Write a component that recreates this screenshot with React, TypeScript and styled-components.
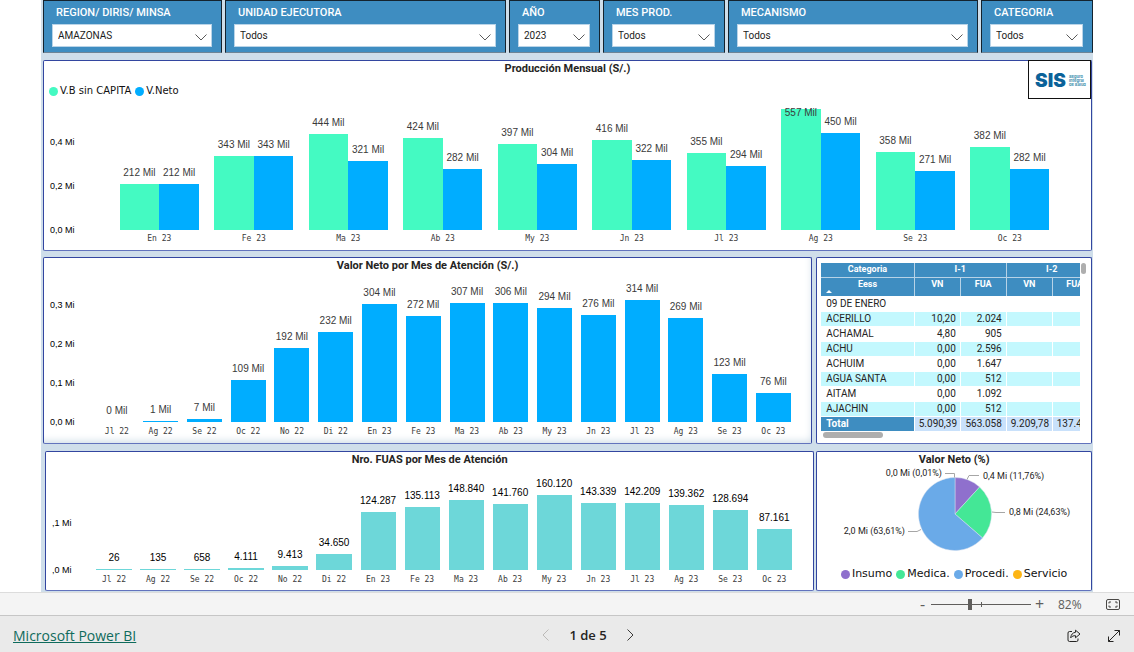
import React from "react";
import styled, { createGlobalStyle } from "styled-components";

const GlobalStyle = createGlobalStyle`
  *, *::before, *::after { box-sizing: border-box; }
  body {
    margin: 0;
    background: #ffffff;
    font-family: Roboto, "Liberation Sans", sans-serif;
    color: #252423;
  }
  button, select, input { font: inherit; color: inherit; margin: 0; }
`;

const Report = styled.main`
  display: flex;
  flex-direction: column;
  margin: 0 41px;
  padding: 0 1px 1px 2px;
  background: #cfdeea;
`;

/* ---------- Slicers ---------- */

const Slicers = styled.form`
  display: grid;
  grid-template-columns: 179fr 281fr 91fr 122fr 250fr 112fr;
  gap: 3px;
  margin-right: -1px;
`;

const Slicer = styled.label`
  display: flex;
  flex-direction: column;
  min-width: 0;
  padding: 4px 9px 5px 8px;
  border: 1px solid #14232e;
  border-bottom-color: #6d8496;
  background: #3e8dc1;
`;

const SlicerTitle = styled.span`
  padding-left: 4px;
  font-size: 11px;
  line-height: 15px;
  font-weight: 500;
  color: #ffffff;
  white-space: nowrap;
`;

const SlicerField = styled.span`
  display: grid;
  align-items: center;
  margin-top: 4px;
  border: 1px solid #b9d4e8;
  background: #ffffff;
  & > * { grid-area: 1 / 1; }
`;

const SlicerSelect = styled.select`
  appearance: none;
  width: 100%;
  height: 21px;
  padding: 0 20px 0 5px;
  border: 0;
  background: transparent;
  font-size: 10px;
  line-height: 21px;
  color: #1c1c1c;
`;

const SlicerChevron = styled.svg`
  justify-self: end;
  margin: 4px 4px 0 0;
  pointer-events: none;
`;

/* ---------- Panels ---------- */

const Panel = styled.section<{ $glow?: boolean }>`
  position: relative;
  display: flex;
  flex-direction: column;
  min-width: 0;
  border: 1px solid #3346a0;
  border-bottom-color: #6273bd;
  border-radius: 2px;
  background: #ffffff;
  box-shadow: ${(p) => (p.$glow ? "inset -4px -7px 8px -6px #c6d6e2" : "none")};
`;

const PanelTitle = styled.h2`
  margin: 0;
  font-size: 11px;
  line-height: 15px;
  font-weight: 700;
  text-align: center;
`;

const Top = styled.div`
  margin: 7px 0 6px;
`;

const Row = styled.div<{ $indent?: number; $gap: number }>`
  display: grid;
  grid-template-columns: minmax(0, 770fr) minmax(0, 276fr);
  gap: ${(p) => p.$gap}px;
  padding-left: ${(p) => p.$indent ?? 0}px;
  & + & { margin-top: 7px; }
`;

const LogoBox = styled.div`
  position: absolute;
  top: -1px;
  right: 0;
  width: 63px;
  height: 39px;
  border: 1px solid #111111;
  background: #ffffff;
`;

const Legend = styled.ul<{ $size: number; $center?: boolean }>`
  display: flex;
  justify-content: ${(p) => (p.$center ? "center" : "flex-start")};
  gap: 4px;
  margin: ${(p) => (p.$center ? "10px 0 8px" : "8px 0 9px")};
  padding: 0 5px;
  list-style: none;
  font-family: "DejaVu Sans", sans-serif;
  font-size: ${(p) => p.$size}px;
  line-height: 14px;
  color: #111111;
`;

const LegendItem = styled.li<{ $color: string }>`
  display: flex;
  align-items: center;
  gap: 2px;
  white-space: nowrap;
  &::before {
    content: "";
    width: 9px;
    height: 9px;
    border-radius: 50%;
    background: ${(p) => p.$color};
  }
`;

/* ---------- Bar charts ---------- */

const ChartBody = styled.div<{ $axis: number; $right: number; $bottom: number }>`
  display: grid;
  grid-template-columns: ${(p) => p.$axis}px minmax(0, 1fr);
  margin-top: auto;
  padding: 0 ${(p) => p.$right}px ${(p) => p.$bottom}px 0;
`;

const Axis = styled.div<{ $step: number; $base: number }>`
  display: flex;
  flex-direction: column;
  justify-content: flex-end;
  gap: ${(p) => p.$step - 10}px;
  padding: 0 0 ${(p) => p.$base - 5}px 6px;
  font-family: "Liberation Sans", sans-serif;
  font-size: 9px;
  line-height: 10px;
  color: #000000;
`;

const Plot = styled.div`
  display: flex;
`;

const Group = styled.div`
  flex: 1 1 0;
  min-width: 0;
  display: flex;
  flex-direction: column;
  align-items: center;
`;

const Bars = styled.div<{ $height: number; $share: number }>`
  display: flex;
  align-items: flex-end;
  width: ${(p) => p.$share}%;
  height: ${(p) => p.$height}px;
`;

const BarSlot = styled.div`
  flex: 1 1 0;
  min-width: 0;
  display: flex;
  flex-direction: column;
  align-items: center;
`;

const BarLabel = styled.span<{ $dark?: boolean }>`
  position: relative;
  z-index: 1;
  font-family: "Liberation Sans", sans-serif;
  font-size: 10px;
  line-height: 12px;
  color: ${(p) => (p.$dark ? "#000000" : "#3a3a3a")};
  white-space: nowrap;
`;

const Bar = styled.div<{ $color: string }>`
  width: 100%;
  background: ${(p) => p.$color};
`;

const Category = styled.span<{ $row: number }>`
  font-family: "DejaVu Sans Mono", monospace;
  font-size: 8px;
  line-height: ${(p) => p.$row}px;
  color: #3a3a3a;
  white-space: nowrap;
`;

type Series = { color: string; values: number[]; labels: string[] };

type BarChartProps = {
  months: string[];
  series: Series[];
  ticks: string[];
  step: number;
  scale: number;
  height: number;
  labelRow: number;
  bottom: number;
  axis: number;
  right: number;
  share: number;
  dark?: boolean;
};

function BarChart(p: BarChartProps) {
  return (
    <ChartBody $axis={p.axis} $right={p.right} $bottom={p.bottom}>
      <Axis $step={p.step} $base={p.labelRow}>
        {p.ticks.map((t) => (
          <span key={t}>{t}</span>
        ))}
      </Axis>
      <Plot>
        {p.months.map((m, i) => (
          <Group key={m}>
            <Bars $height={p.height} $share={p.share}>
              {p.series.map((s) => {
                const h = Math.max(Math.round(s.values[i] * p.scale), s.values[i] > 0 ? 1 : 0);
                return (
                  <BarSlot key={s.color}>
                    <BarLabel $dark={p.dark} style={{ marginBottom: Math.min(5, p.height - 12 - h) }}>
                      {s.labels[i]}
                    </BarLabel>
                    <Bar $color={s.color} style={{ height: h }} />
                  </BarSlot>
                );
              })}
            </Bars>
            <Category $row={p.labelRow}>{m}</Category>
          </Group>
        ))}
      </Plot>
    </ChartBody>
  );
}

/* ---------- Matrix ---------- */

const MatrixArea = styled.div`
  display: grid;
  grid-template-columns: minmax(0, 1fr) 5px;
  column-gap: 1px;
  padding: 5px 5px 3px 4px;
`;

const MatrixClip = styled.div`
  overflow: hidden;
`;

const Table = styled.table`
  table-layout: fixed;
  width: 276px;
  border-collapse: collapse;
  font-size: 10px;
  line-height: 13px;
`;

const HeadCell = styled.th<{ $tall?: boolean }>`
  height: ${(p) => (p.$tall ? 19 : 14)}px;
  padding: 0;
  border-right: 1px solid #b7d3e7;
  border-bottom: ${(p) => (p.$tall ? "0" : "1px solid #b7d3e7")};
  background: #3e8dc1;
  color: #ffffff;
  font-size: 9px;
  font-weight: 700;
  text-align: center;
  vertical-align: top;
`;

const SortMark = styled.span`
  position: absolute;
  left: 9px;
  top: 32px;
  border: 3px solid transparent;
  border-top: 0;
  border-bottom-color: #ffffff;
`;

const BodyRow = styled.tr<{ $alt: boolean }>`
  background: ${(p) => (p.$alt ? "#c3f8fe" : "#ffffff")};
`;

const NameCell = styled.th`
  height: 15px;
  padding: 0 0 0 5px;
  border-right: 1px solid #ffffff;
  border-bottom: 1px solid #ffffff;
  font-weight: 400;
  text-align: left;
  white-space: nowrap;
`;

const NumCell = styled.td<{ $start?: boolean }>`
  height: 15px;
  padding: 0 4px;
  border-right: 1px solid #ffffff;
  border-bottom: 1px solid #ffffff;
  text-align: ${(p) => (p.$start ? "left" : "right")};
  white-space: nowrap;
`;

const TotalRow = styled.tr`
  background: #c9e1fb;
  & > th {
    background: #3e8dc1;
    color: #ffffff;
    font-weight: 700;
  }
`;

const ScrollThumb = styled.div<{ $w: number; $h: number }>`
  width: ${(p) => p.$w}px;
  height: ${(p) => p.$h}px;
  margin-left: ${(p) => (p.$w > p.$h ? 2 : 0)}px;
  border-radius: 3px;
  background: #aeaeae;
`;

/* ---------- Pie ---------- */

const PieSvg = styled.svg`
  align-self: center;
  font-size: 9px;
  fill: #252423;
`;

/* ---------- Zoom bar and footer ---------- */

const ZoomBar = styled.div`
  display: flex;
  align-items: center;
  justify-content: flex-end;
  height: 24px;
  padding-right: 14px;
  border-top: 1px solid #dcdcdc;
  border-bottom: 1px solid #c6c6c6;
  background: #f4f4f4;
  font-family: "Open Sans", sans-serif;
  font-size: 12px;
  color: #605e5c;
`;

const PlainButton = styled.button`
  display: flex;
  align-items: center;
  justify-content: center;
  padding: 0;
  border: 0;
  background: transparent;
  line-height: 16px;
  cursor: pointer;
`;

const StepButton = styled(PlainButton)`
  width: 17px;
  font-size: 16px;
`;

const Track = styled.span`
  position: relative;
  display: flex;
  width: 100px;
  &::after {
    content: "";
    position: absolute;
    left: 50px;
    top: 5px;
    width: 1px;
    height: 5px;
    background: #605e5c;
  }
`;

const Range = styled.input`
  appearance: none;
  width: 100%;
  height: 15px;
  background: linear-gradient(#605e5c, #605e5c) center / 100% 1px no-repeat;
  &::-webkit-slider-thumb {
    appearance: none;
    width: 4px;
    height: 11px;
    background: #605e5c;
  }
`;

const ZoomValue = styled.output`
  width: 48px;
  padding-left: 10px;
`;

const FitButton = styled(PlainButton)`
  width: 14px;
  margin-left: 10px;
`;

const Footer = styled.footer`
  display: grid;
  grid-template-columns: 1fr auto 1fr;
  align-items: center;
  height: 36px;
  padding: 0 13px;
  background: #eaeaea;
  font-family: "Open Sans", "Noto Sans", sans-serif;
`;

const BrandLink = styled.a`
  justify-self: start;
  margin-top: 4px;
  font-size: 14px;
  line-height: 20px;
  color: #0f6b5c;
`;

const Pager = styled.nav`
  display: flex;
  align-items: center;
  gap: 20px;
  padding: 2px 0 0 42px;
  font-size: 13px;
  line-height: 20px;
  font-weight: 600;
  color: #252423;
`;

const Actions = styled.div`
  display: flex;
  justify-self: end;
  gap: 26px;
  padding-top: 3px;
`;

/* ---------- Data ---------- */

const slicers = [
  { title: "REGION/ DIRIS/ MINSA", value: "AMAZONAS" },
  { title: "UNIDAD EJECUTORA", value: "Todos" },
  { title: "AÑO", value: "2023" },
  { title: "MES PROD.", value: "Todos" },
  { title: "MECANISMO", value: "Todos" },
  { title: "CATEGORIA", value: "Todos" },
];

const months2023 = ["En 23", "Fe 23", "Ma 23", "Ab 23", "My 23", "Jn 23", "Jl 23", "Ag 23", "Se 23", "Oc 23"];
const allMonths = ["Jl 22", "Ag 22", "Se 22", "Oc 22", "No 22", "Di 22", ...months2023];

const gross = [212, 343, 444, 424, 397, 416, 355, 557, 358, 382];
const net = [212, 343, 321, 282, 304, 322, 294, 450, 271, 282];
const netByCare = [0, 1, 7, 109, 192, 232, 304, 272, 307, 306, 294, 276, 314, 269, 123, 76];
const fuas = [
  "26", "135", "658", "4.111", "9.413", "34.650", "124.287", "135.113",
  "148.840", "141.760", "160.120", "143.339", "142.209", "139.362", "128.694", "87.161",
];

const mil = (v: number[]) => v.map((n) => `${n} Mil`);

const rows = [
  ["09 DE ENERO", "", ""],
  ["ACERILLO", "10,20", "2.024"],
  ["ACHAMAL", "4,80", "905"],
  ["ACHU", "0,00", "2.596"],
  ["ACHUIM", "0,00", "1.647"],
  ["AGUA SANTA", "0,00", "512"],
  ["AITAM", "0,00", "1.092"],
  ["AJACHIN", "0,00", "512"],
];

const slices = [
  { name: "Insumo", share: 11.76, color: "#8f70cd" },
  { name: "Medica.", share: 24.63, color: "#44e796" },
  { name: "Procedi.", share: 63.61, color: "#6aaae8" },
  { name: "Servicio", share: 0, color: "#fdb515" },
];

function Pie() {
  const cx = 138;
  const cy = 47;
  const r = 36.5;
  const point = (share: number) => {
    const a = (share / 100) * 2 * Math.PI;
    return `${cx + r * Math.sin(a)} ${cy - r * Math.cos(a)}`;
  };
  let from = 0;
  return (
    <PieSvg width="274" height="90" viewBox="0 0 274 90" role="img" aria-label="Valor Neto (%)">
      {slices
        .filter((s) => s.share > 0)
        .map((s) => {
          const start = from;
          from += s.share;
          return (
            <path
              key={s.name}
              d={`M${cx} ${cy}L${point(start)}A${r} ${r} 0 ${s.share > 50 ? 1 : 0} 1 ${point(from)}Z`}
              fill={s.color}
              stroke="#d5dfee"
              strokeWidth="0.5"
            />
          );
        })}
      <path d="M128 6.500h9.500v4M162 8.500h-10l-2 4M175 45l4 .5h9M91 64.500h9l4-2" fill="none" stroke="#a6a6a6" />
      <text x="125" y="9" textAnchor="end">0,0 Mi (0,01%)</text>
      <text x="166" y="12">0,4 Mi (11,76%)</text>
      <text x="192" y="48">0,8 Mi (24,63%)</text>
      <text x="88" y="67" textAnchor="end">2,0 Mi (63,61%)</text>
    </PieSvg>
  );
}

function Logo() {
  return (
    <LogoBox>
      <svg width="61" height="37" viewBox="0 0 61 37" role="img" aria-label="SIS Seguro Integral de Salud">
        <text x="6" y="26" fontFamily="Inter, sans-serif" fontWeight="900" fontSize="19" fill="#0b6299">SIS</text>
        <g fontFamily="Inter, sans-serif" fontWeight="700" fontSize="4" fill="#3f8fae">
          <text x="40" y="17">Seguro</text>
          <text x="40" y="21">Integral</text>
          <text x="40" y="25">de Salud</text>
        </g>
      </svg>
    </LogoBox>
  );
}

export default function App() {
  return (
    <>
      <GlobalStyle />
      <Report>
        <Slicers>
          {slicers.map((s) => (
            <Slicer key={s.title}>
              <SlicerTitle>{s.title}</SlicerTitle>
              <SlicerField>
                <SlicerSelect defaultValue={s.value}>
                  <option>{s.value}</option>
                </SlicerSelect>
                <SlicerChevron width="12" height="7" viewBox="0 0 12 7" fill="none" stroke="#5a5a5a">
                  <path d="M.5.5 6 6 11.500.5" />
                </SlicerChevron>
              </SlicerField>
            </Slicer>
          ))}
        </Slicers>

        <Top>
          <Panel>
            <PanelTitle>Producción Mensual (S/.)</PanelTitle>
            <Legend $size={10}>
              <LegendItem $color="#44fac2">V.B sin CAPITA</LegendItem>
              <LegendItem $color="#00adff">V.Neto</LegendItem>
            </Legend>
            <BarChart
              months={months2023}
              series={[
                { color: "#44fac2", values: gross, labels: mil(gross) },
                { color: "#00adff", values: net, labels: mil(net) },
              ]}
              ticks={["0,4 Mi", "0,2 Mi", "0,0 Mi"]}
              step={44}
              scale={0.2165}
              height={123}
              labelRow={18}
              bottom={2}
              axis={68}
              right={34}
              share={84}
            />
            <Logo />
          </Panel>
        </Top>

        <Row $gap={4}>
          <Panel $glow>
            <PanelTitle>Valor Neto por Mes de Atención (S/.)</PanelTitle>
            <BarChart
              months={allMonths}
              series={[{ color: "#00adff", values: netByCare, labels: mil(netByCare) }]}
              ticks={["0,3 Mi", "0,2 Mi", "0,1 Mi", "0,0 Mi"]}
              step={39}
              scale={0.388}
              height={149}
              labelRow={20}
              bottom={1}
              axis={51}
              right={16}
              share={80}
            />
          </Panel>
          <Panel>
            <MatrixArea>
              <MatrixClip>
                <Table>
                  <colgroup>
                    <col width="93" />
                    <col width="46" />
                    <col width="46" />
                    <col width="46" />
                    <col width="45" />
                  </colgroup>
                  <thead>
                    <tr>
                      <HeadCell>Categoria</HeadCell>
                      <HeadCell colSpan={2}>I-1</HeadCell>
                      <HeadCell colSpan={2}>I-2</HeadCell>
                    </tr>
                    <tr>
                      <HeadCell $tall>
                        Eess
                        <SortMark />
                      </HeadCell>
                      <HeadCell $tall>VN</HeadCell>
                      <HeadCell $tall>FUA</HeadCell>
                      <HeadCell $tall>VN</HeadCell>
                      <HeadCell $tall>FUA</HeadCell>
                    </tr>
                  </thead>
                  <tbody>
                    {rows.map(([name, vn, fua], i) => (
                      <BodyRow key={name} $alt={i % 2 === 1}>
                        <NameCell scope="row">{name}</NameCell>
                        <NumCell>{vn}</NumCell>
                        <NumCell>{fua}</NumCell>
                        <NumCell />
                        <NumCell />
                      </BodyRow>
                    ))}
                  </tbody>
                  <tfoot>
                    <TotalRow>
                      <NameCell scope="row">Total</NameCell>
                      <NumCell>5.090,39</NumCell>
                      <NumCell>563.058</NumCell>
                      <NumCell>9.209,78</NumCell>
                      <NumCell $start>137.4</NumCell>
                    </TotalRow>
                  </tfoot>
                </Table>
              </MatrixClip>
              <ScrollThumb $w={5} $h={11} />
              <ScrollThumb $w={60} $h={6} />
            </MatrixArea>
          </Panel>
        </Row>

        <Row $gap={2} $indent={2}>
          <Panel>
            <PanelTitle>Nro. FUAS por Mes de Atención</PanelTitle>
            <BarChart
              months={allMonths}
              series={[
                { color: "#6dd7d9", values: fuas.map((f) => Number(f.replace(".", ""))), labels: fuas },
              ]}
              ticks={[",1 Mi", ",0 Mi"]}
              step={47}
              scale={0.000469}
              height={103}
              labelRow={20}
              bottom={0}
              axis={46}
              right={17}
              share={80}
              dark
            />
          </Panel>
          <Panel>
            <PanelTitle>Valor Neto (%)</PanelTitle>
            <Pie />
            <Legend $size={11} $center>
              {slices.map((s) => (
                <LegendItem key={s.name} $color={s.color}>{s.name}</LegendItem>
              ))}
            </Legend>
          </Panel>
        </Row>
      </Report>

      <ZoomBar>
        <StepButton type="button" aria-label="Alejar">-</StepButton>
        <Track>
          <Range type="range" min={0} max={100} defaultValue={39} aria-label="Zoom" />
        </Track>
        <StepButton type="button" aria-label="Acercar">+</StepButton>
        <ZoomValue>82%</ZoomValue>
        <FitButton type="button" aria-label="Ajustar a la página">
          <svg width="14" height="11" viewBox="0 0 14 11" fill="none" stroke="#4a4846">
            <rect x=".5" y=".5" width="13" height="10" rx="1.500" />
            <path d="M3 4.500v-1.500h2M9 3h2v1.500M3 6.500v1.500h2M9 8h2v-1.500" />
          </svg>
        </FitButton>
      </ZoomBar>

      <Footer>
        <BrandLink href="#powerbi">Microsoft Power BI</BrandLink>
        <Pager aria-label="Páginas">
          <PlainButton type="button" disabled aria-label="Página anterior">
            <svg width="7" height="12" viewBox="0 0 7 12" fill="none" stroke="#bcbab8">
              <path d="M6.500.5 1 6l5.500 5.500" />
            </svg>
          </PlainButton>
          <span>1 de 5</span>
          <PlainButton type="button" aria-label="Página siguiente">
            <svg width="7" height="12" viewBox="0 0 7 12" fill="none" stroke="#3b3a39">
              <path d="M.5.5 6 6 .5 11.500" />
            </svg>
          </PlainButton>
        </Pager>
        <Actions>
          <PlainButton type="button" aria-label="Compartir">
            <svg width="14" height="14" viewBox="0 0 14 14" fill="none" stroke="#252423" strokeLinejoin="round">
              <path d="M5 2.500H2.500a1.500 1.500 0 0 0-1.500 1.500v7a1.500 1.500 0 0 0 1.500 1.500h7a1.500 1.500 0 0 0 1.500-1.500v-1.500" />
              <path d="M8.500 1.200 13 5 8.500 8.800V6.700C6.500 6.600 5 7.200 3.700 8.800 4 5.600 5.700 3.600 8.500 3.300z" />
            </svg>
          </PlainButton>
          <PlainButton type="button" aria-label="Pantalla completa">
            <svg width="14" height="14" viewBox="0 0 14 14" fill="none" stroke="#252423">
              <path d="M1.500 12.500l11-11M7.500 1.500h5v5M1.500 7.500v5h5" />
            </svg>
          </PlainButton>
        </Actions>
      </Footer>
    </>
  );
}
